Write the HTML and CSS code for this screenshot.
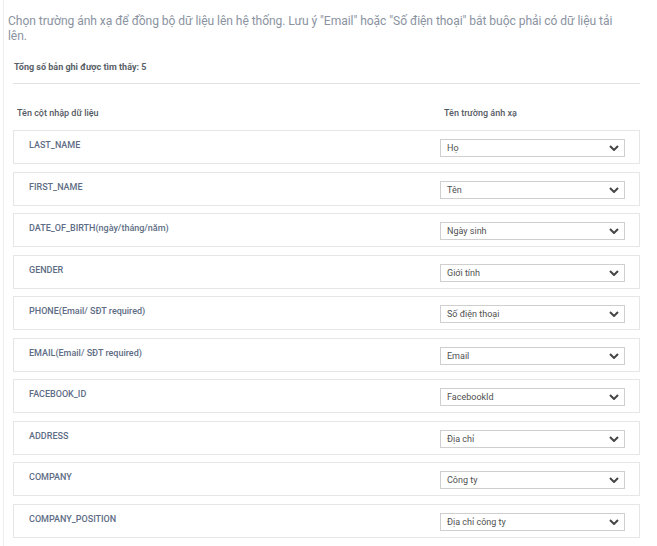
FILE: index.html
```html
<!DOCTYPE html>
<html lang="vi">
<head>
<meta charset="utf-8">
<title>Mapping</title>
<link rel="stylesheet" href="styles.css">
</head>
<body>
<div class="page">
  <p class="intro">Chọn trường ánh xạ để đồng bộ dữ liệu lên hệ thống. Lưu ý "Email" hoặc "Số điện thoại" bắt buộc phải có dữ liệu tải lên.</p>
  <div class="total">Tổng số bản ghi được tìm thấy: 5</div>
  <div class="divider"></div>
  <div class="head">
    <span class="head-left">Tên cột nhập dữ liệu</span>
    <span class="head-right">Tên trường ánh xạ</span>
  </div>
  <div class="rows">
    <div class="card"><span class="label">LAST_NAME</span><div class="select"><span>Họ</span><svg class="chev" viewBox="0 0 10 6"><path d="M1 1 L5 5 L9 1"/></svg></div></div>
    <div class="card"><span class="label">FIRST_NAME</span><div class="select"><span>Tên</span><svg class="chev" viewBox="0 0 10 6"><path d="M1 1 L5 5 L9 1"/></svg></div></div>
    <div class="card"><span class="label">DATE_OF_BIRTH(ngày/tháng/năm)</span><div class="select"><span>Ngày sinh</span><svg class="chev" viewBox="0 0 10 6"><path d="M1 1 L5 5 L9 1"/></svg></div></div>
    <div class="card"><span class="label">GENDER</span><div class="select"><span>Giới tính</span><svg class="chev" viewBox="0 0 10 6"><path d="M1 1 L5 5 L9 1"/></svg></div></div>
    <div class="card"><span class="label">PHONE(Email/ SĐT required)</span><div class="select"><span>Số điện thoại</span><svg class="chev" viewBox="0 0 10 6"><path d="M1 1 L5 5 L9 1"/></svg></div></div>
    <div class="card"><span class="label">EMAIL(Email/ SĐT required)</span><div class="select"><span>Email</span><svg class="chev" viewBox="0 0 10 6"><path d="M1 1 L5 5 L9 1"/></svg></div></div>
    <div class="card"><span class="label">FACEBOOK_ID</span><div class="select"><span>FacebookId</span><svg class="chev" viewBox="0 0 10 6"><path d="M1 1 L5 5 L9 1"/></svg></div></div>
    <div class="card"><span class="label">ADDRESS</span><div class="select"><span>Địa chỉ</span><svg class="chev" viewBox="0 0 10 6"><path d="M1 1 L5 5 L9 1"/></svg></div></div>
    <div class="card"><span class="label">COMPANY</span><div class="select"><span>Công ty</span><svg class="chev" viewBox="0 0 10 6"><path d="M1 1 L5 5 L9 1"/></svg></div></div>
    <div class="card"><span class="label">COMPANY_POSITION</span><div class="select"><span>Địa chỉ công ty</span><svg class="chev" viewBox="0 0 10 6"><path d="M1 1 L5 5 L9 1"/></svg></div></div>
  </div>
</div>
</body>
</html>
```

FILE: styles.css
```css
html, body {
  margin: 0;
  padding: 0;
  background: #ffffff;
}

body {
  font-family: Roboto, "Noto Sans", "Liberation Sans", sans-serif;
  overflow: hidden;
}

.page {
  margin-left: 3px;
  border-left: 1px solid #eeeeee;
  min-height: 546px;
  padding: 0 17px 0 9px;
}

.intro {
  margin: 0;
  padding: 14px 0 0 0;
  margin-left: -5px;
  max-width: 622px;
  font-size: 12.1px;
  letter-spacing: -0.07px;
  line-height: 15px;
  color: #8b93a1;
}

.total {
  margin-top: 17px;
  margin-left: 1px;
  font-size: 9px;
  line-height: 12px;
  font-weight: 700;
  color: #595f68;
}

.divider {
  margin-top: 10px;
  height: 1px;
  background: #e2e2e2;
}

.head {
  display: flex;
  justify-content: space-between;
  padding: 23px 0 0 4px;
  font-size: 9px;
  line-height: 12px;
  font-weight: 500;
  color: #545a63;
}

.head-right {
  width: 196px;
}

.rows {
  display: flex;
  flex-direction: column;
  gap: 7.5px;
  margin-top: 11px;
}

.card {
  display: flex;
  justify-content: space-between;
  align-items: flex-start;
  border: 1px solid #e6e6e6;
  padding: 8px 14px 6px 15px;
}

.label {
  font-size: 9px;
  line-height: 12px;
  font-weight: 500;
  color: #5e6d85;
}

.select {
  box-sizing: border-box;
  width: 185px;
  height: 18px;
  border: 1px solid #cfcfcf;
  display: flex;
  align-items: center;
  justify-content: space-between;
  padding: 0 5px 0 6px;
  font-size: 9px;
  color: #505050;
}

.chev {
  width: 10px;
  height: 6px;
}

.chev path {
  fill: none;
  stroke: #454545;
  stroke-width: 2;
}
```
